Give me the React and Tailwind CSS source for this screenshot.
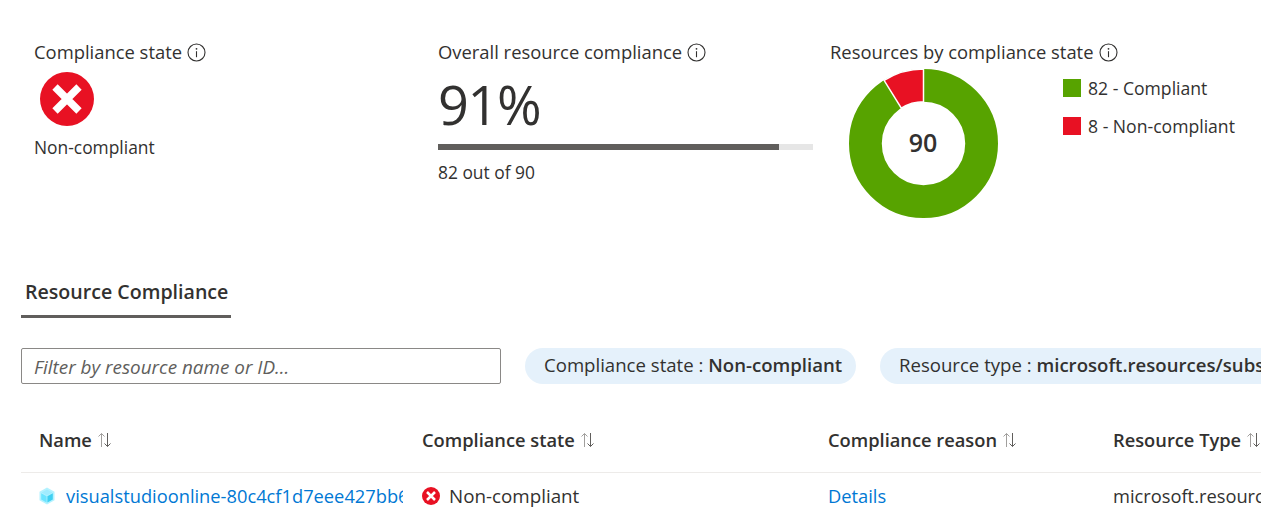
import React from 'react';

const FONT = "font-['Open_Sans',sans-serif]";

function InfoIcon() {
  return (
    <svg width="19" height="19" viewBox="0 0 19 19" fill="none" className="flex-shrink-0">
      <circle cx="9.5" cy="9.5" r="8.5" stroke="#323130" strokeWidth="1.1" />
      <circle cx="9.5" cy="5.8" r="0.9" fill="#323130" />
      <path d="M9.5 8.2v6" stroke="#323130" strokeWidth="1.1" />
    </svg>
  );
}

function ErrorIcon({ size }) {
  return (
    <svg width={size} height={size} viewBox="0 0 54 54" className="flex-shrink-0">
      <circle cx="27" cy="27" r="27" fill="#e81123" />
      <path d="M15 15l24 24M39 15L15 39" stroke="#fff" strokeWidth="7.5" />
    </svg>
  );
}

function SortIcon() {
  return (
    <svg width="15" height="16" viewBox="0 0 15 16" fill="none" className="flex-shrink-0">
      <path d="M4.5 15V1.5M1.5 4.5l3-3 3 3" stroke="#a19f9d" strokeWidth="1" />
      <path d="M10.5 1v13.5M7.5 11.5l3 3 3-3" stroke="#605e5c" strokeWidth="1" />
    </svg>
  );
}

function CubeIcon() {
  return (
    <svg width="16" height="18" viewBox="0 0 16 18" className="flex-shrink-0">
      <path d="M8 0.5l7.5 4.2v8.6L8 17.5 0.5 13.3V4.7z" fill="#b4f2ff" />
      <path d="M8 2.5l5.5 3L8 8.5 2.5 5.5z" fill="#a0ecff" />
      <path d="M2.2 6.2L7.6 9.2v6.2l-5.4-3z" fill="#6be4ff" />
      <path d="M13.8 6.2L8.4 9.2v6.2l5.4-3z" fill="#3fd0f2" />
    </svg>
  );
}

function Donut() {
  return (
    <svg width="149" height="149" viewBox="0 0 150 150" className="block">
      <circle cx="75" cy="75" r="58.5" fill="none" stroke="#57a300" strokeWidth="33" />
      <path d="M75 0A75 75 0 0 0 35.3 11.4L52.7 39.4A42 42 0 0 1 75 33Z" fill="#e81123" stroke="#fff" strokeWidth="1.5" />
    </svg>
  );
}

function SummaryTitle({ children }) {
  return (
    <div className="flex items-center gap-[5px] h-6 text-[18.4px] text-[#323130] whitespace-nowrap">
      <span>{children}</span>
      <InfoIcon />
    </div>
  );
}

function LegendItem({ color, label }) {
  return (
    <div className="flex items-center gap-[7px] h-[18px] text-[17.6px] text-[#323130] whitespace-nowrap">
      <span className={`w-[18px] h-[18px] ${color}`} />
      <span>{label}</span>
    </div>
  );
}

function Pill({ label, value, className }) {
  return (
    <div className={`h-9 rounded-[18px] bg-[#e5f1fb] pl-[19px] pr-[13px] pb-[2px] flex items-center text-[18.6px] text-[#323130] whitespace-nowrap ${className}`}>
      {label} :&nbsp;<b className="font-semibold">{value}</b>
    </div>
  );
}

function HeaderCell({ label, className }) {
  return (
    <div className={`flex items-center gap-[5px] font-semibold text-[18.3px] text-[#323130] whitespace-nowrap ${className}`}>
      {label}
      <SortIcon />
    </div>
  );
}

export default function App() {
  return (
    <div className={`w-[1261px] h-[517px] overflow-hidden bg-white pt-10 ${FONT}`}>
      {/* Summary */}
      <div className="flex h-[236px]">
        <div className="w-[438px] pl-[34px]">
          <SummaryTitle>Compliance state</SummaryTitle>
          <div className="ml-1.5 mt-[8px]"><ErrorIcon size={54} /></div>
          <div className="mt-[9px] text-[17.4px] leading-6 text-[#323130]">Non-compliant</div>
        </div>
        <div className="w-[392px]">
          <SummaryTitle>Overall resource compliance</SummaryTitle>
          <div className="h-[68px] mt-[6px] text-[54px] leading-[68px] text-[#323130] tracking-tight">91%</div>
          <div className="w-[375px] h-[6px] mt-[6px] bg-[#e6e6e6]">
            <div className="w-[341px] h-full bg-[#605e5c]" />
          </div>
          <div className="mt-[10px] text-[17.4px] leading-6 text-[#323130]">82 out of 90</div>
        </div>
        <div>
          <SummaryTitle>Resources by compliance state</SummaryTitle>
          <div className="flex mt-[5px] ml-[19px]">
            <div className="relative w-[150px] h-[150px]">
              <Donut />
              <span className="absolute inset-0 flex items-center justify-center text-[25px] font-semibold text-[#323130] pr-0.5 pb-0.5">90</span>
            </div>
            <div className="ml-[64px] mt-[10px] flex flex-col gap-5">
              <LegendItem color="bg-[#57a300]" label="82 - Compliant" />
              <LegendItem color="bg-[#e81123]" label="8 - Non-compliant" />
            </div>
          </div>
        </div>
      </div>

      {/* Tab */}
      <div className="pl-[21px]">
        <div className="w-[210px] h-[42px] border-b-[3px] border-[#605e5c] pl-1 pt-[2px] text-[19.6px] font-semibold leading-7 text-[#323130] whitespace-nowrap">
          Resource Compliance
        </div>
      </div>

      {/* Filters */}
      <div className="flex items-center pl-[21px] mt-[30px]">
        <input
          readOnly
          placeholder="Filter by resource name or ID..."
          className="w-[480px] h-9 flex-shrink-0 border border-[#8a8886] rounded-[2px] px-3 pt-[1px] text-[18.9px] italic text-[#323130] placeholder-[#605e5c] outline-none"
        />
        <Pill label="Compliance state" value="Non-compliant" className="ml-6 w-[331px] flex-shrink-0" />
        <Pill label="Resource type" value="microsoft.resources/subscriptions/resourcegroups" className="ml-6 flex-shrink-0" />
      </div>

      {/* Table */}
      <div className="ml-[21px] mt-[39px]">
        <div className="flex items-start h-[50px] border-b border-[#edebe9] pt-[3px]">
          <HeaderCell label="Name" className="w-[401px] pl-[18px]" />
          <HeaderCell label="Compliance state" className="w-[406px]" />
          <HeaderCell label="Compliance reason" className="w-[285px]" />
          <HeaderCell label="Resource Type" className="w-[148px]" />
        </div>
        <div className="flex items-center h-[46px] text-[18.3px] text-[#323130] whitespace-nowrap">
          <div className="w-[401px] pl-[18px] flex items-center gap-[11px]">
            <CubeIcon />
            <a className="w-[337px] overflow-hidden text-[#0078d4]">visualstudioonline-80c4cf1d7eee427bb6e1</a>
          </div>
          <div className="w-[406px] flex items-center gap-[9px]">
            <ErrorIcon size={18} />
            <span className="text-[18.8px]">Non-compliant</span>
          </div>
          <a className="w-[285px] text-[#0078d4]">Details</a>
          <div className="w-[148px] overflow-hidden">microsoft.resources/subscriptions</div>
        </div>
      </div>
    </div>
  );
}
